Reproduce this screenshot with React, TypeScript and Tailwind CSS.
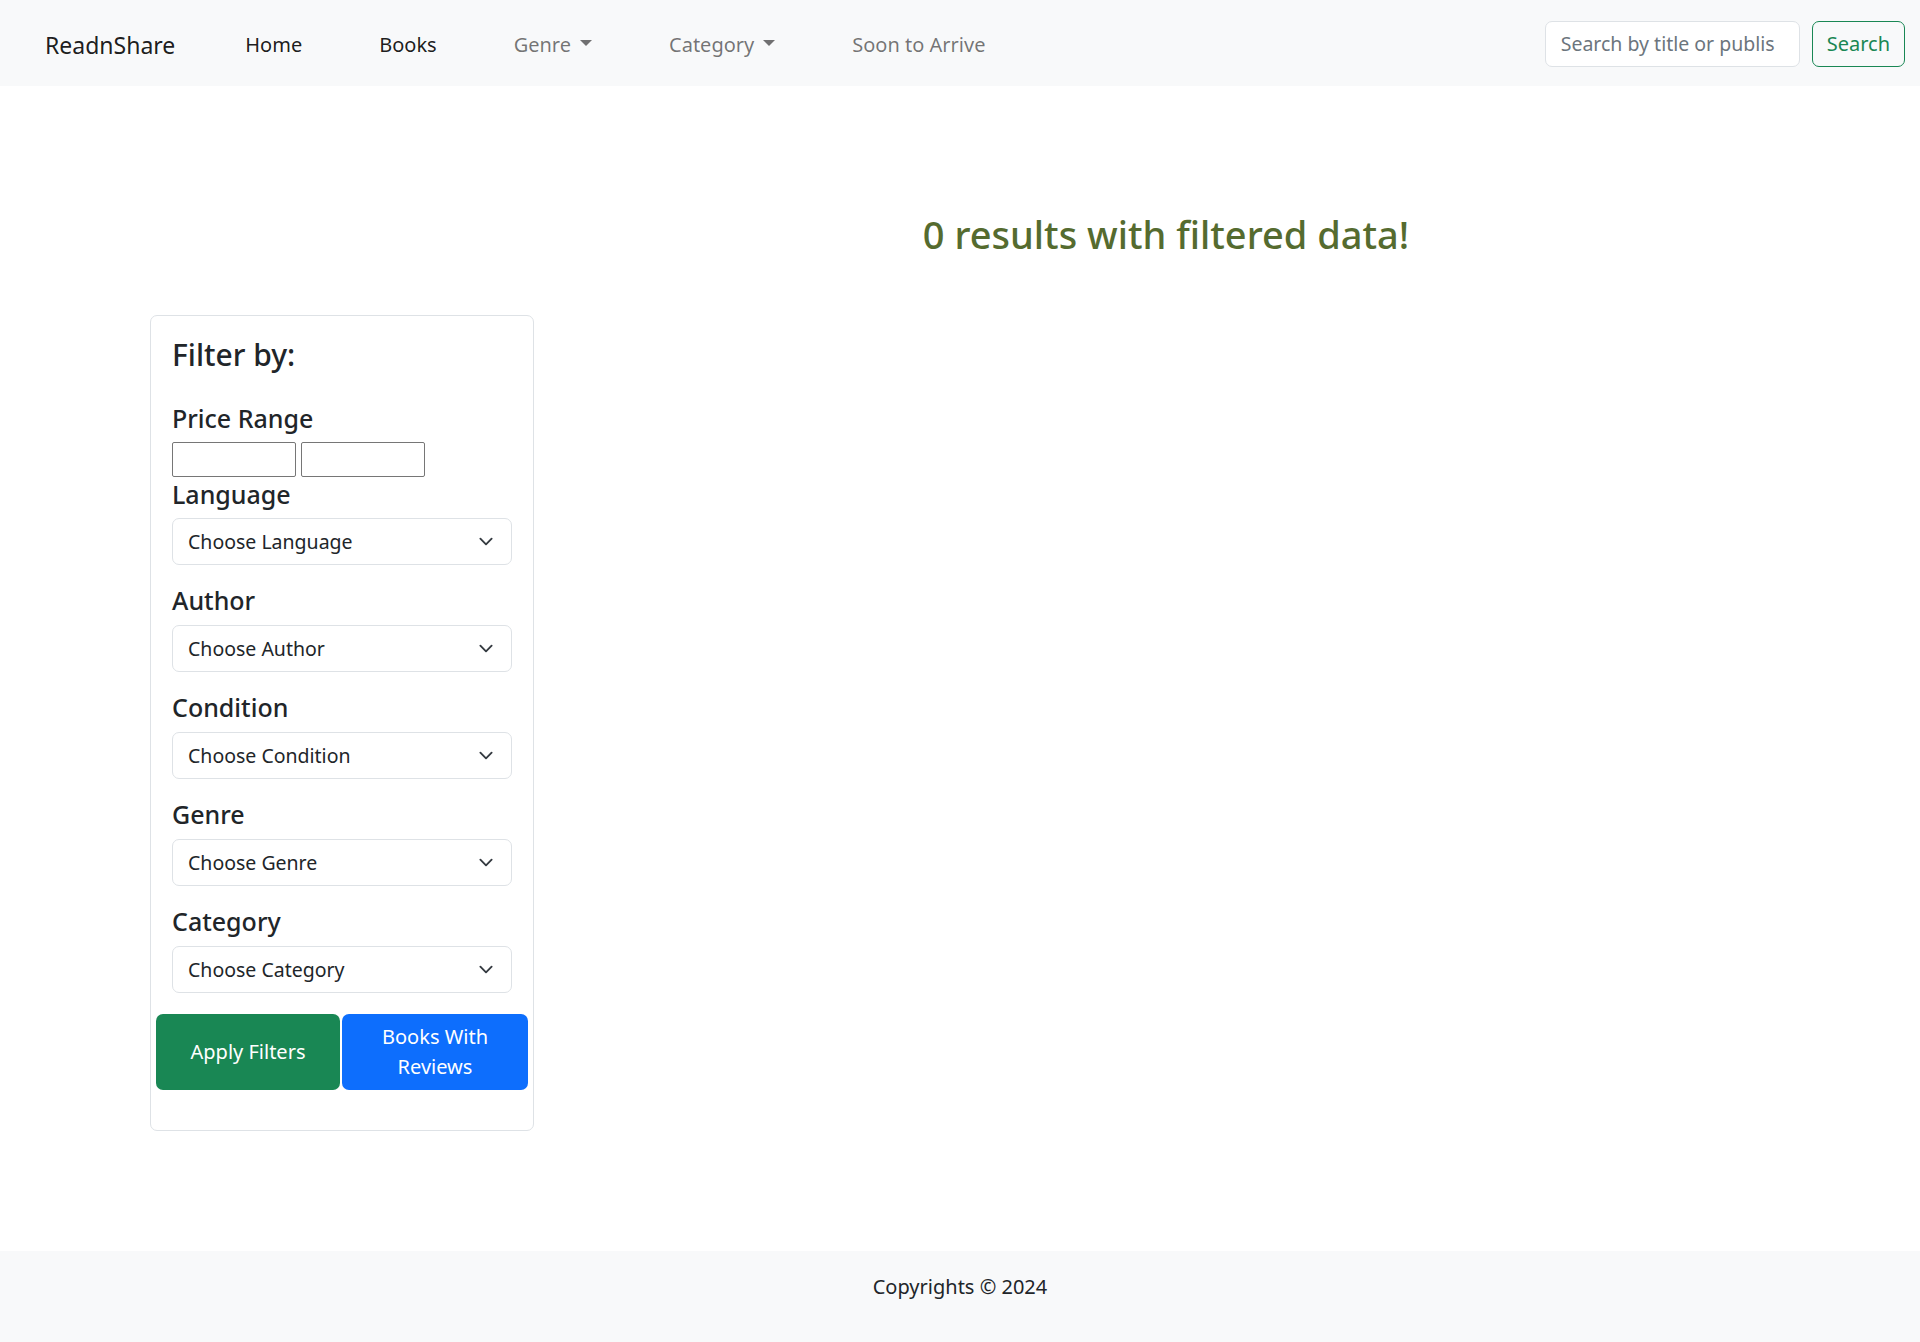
import React from "react";

const font = { fontFamily: '"Segoe UI", "Noto Sans", "Open Sans", sans-serif' };

function Chevron() {
  return (
    <svg width="20" height="15" viewBox="0 0 16 16" className="shrink-0">
      <path d="m2 5 6 6 6-6" fill="none" stroke="#343a40" strokeWidth="2" strokeLinecap="round" strokeLinejoin="round" />
    </svg>
  );
}

function Caret() {
  return <span className="ml-[9px] inline-block w-0 h-0 border-t-[6px] border-t-current border-x-[6px] border-x-transparent translate-y-[-2px]" />;
}

function SelectBox({ label }: { label: string }) {
  return (
    <div className="h-[47px] w-full rounded-[7px] border border-[#dee2e6] bg-white flex items-center justify-between pl-[15px] pr-[15px] text-[19.5px] text-[#212529]">
      <span>{label}</span>
      <Chevron />
    </div>
  );
}

function Field({ title, label }: { title: string; label: string }) {
  return (
    <div className="mb-[20px]">
      <div className="text-[25px] leading-[30px] font-medium text-[#212529] mb-[10px]">{title}</div>
      <SelectBox label={label} />
    </div>
  );
}

export default function App() {
  return (
    <div style={font} className="min-h-screen flex flex-col bg-white text-[#212529]">
      <nav className="h-[86px] bg-[#f8f9fa] flex items-center pl-[45px] pr-[15px] text-[20px]">
        <span className="text-[23px] text-black/90 mr-[70px] pt-[4px]">ReadnShare</span>
        <div className="flex items-center gap-[77px] pt-[4px]">
          <span className="text-black/90">Home</span>
          <span className="text-black/90">Books</span>
          <span className="text-black/55 flex items-center">Genre<Caret /></span>
          <span className="text-black/55 flex items-center">Category<Caret /></span>
          <span className="text-black/55">Soon to Arrive</span>
        </div>
        <div className="ml-auto flex items-center gap-[12px] pt-[2px]">
          <div className="w-[255px] h-[46px] rounded-[7px] border border-[#dee2e6] bg-white flex items-center pl-[15px] text-[19.5px] text-[#6c757d] overflow-hidden whitespace-nowrap">
            Search by title or publis
          </div>
          <div className="h-[46px] px-[14px] rounded-[7px] border border-[#198754] text-[#198754] flex items-center text-[20px]">
            Search
          </div>
        </div>
      </nav>

      <main className="w-[1650px] mx-auto px-[15px]">
        <div className="flex pt-[124px]">
          <div className="w-[412px] shrink-0" />
          <h1 className="flex-1 text-center text-[38px] leading-[48px] font-medium text-[#556b2f]">
            0 results with filtered data!
          </h1>
        </div>

        <div className="mt-[57px] w-[384px] rounded-[7px] border border-[#dee2e6] px-[21px] pt-[21px] pb-[40px]">
          <div className="text-[30px] leading-[36px] font-medium mb-[30px]">Filter by:</div>
          <div className="text-[25px] leading-[30px] font-medium mb-[9px]">Price Range</div>
          <div className="flex gap-[5px] mb-[2px]">
            <div className="w-[124px] h-[35px] border border-[#767676] rounded-[2px] bg-white" />
            <div className="w-[124px] h-[35px] border border-[#767676] rounded-[2px] bg-white" />
          </div>
          <div className="text-[25px] leading-[30px] font-medium mb-[9px]">Language</div>
          <div className="mb-[20px]">
            <SelectBox label="Choose Language" />
          </div>
          <Field title="Author" label="Choose Author" />
          <Field title="Condition" label="Choose Condition" />
          <Field title="Genre" label="Choose Genre" />
          <Field title="Category" label="Choose Category" />
          <div className="flex gap-[2px] -mx-[16px] mt-[21px]">
            <div className="w-[184px] h-[76px] rounded-[7px] bg-[#198754] text-white text-[20px] flex items-center justify-center">
              Apply Filters
            </div>
            <div className="w-[186px] h-[76px] rounded-[7px] bg-[#0d6efd] text-white text-[20px] flex items-center justify-center text-center leading-[30px] px-[20px]">
              Books With Reviews
            </div>
          </div>
        </div>
      </main>

      <footer className="mt-auto h-[91px] bg-[#f8f9fa] flex justify-center pt-[21px] text-[20px] leading-[30px] text-[#212529]">
        Copyrights © 2024
      </footer>
    </div>
  );
}
